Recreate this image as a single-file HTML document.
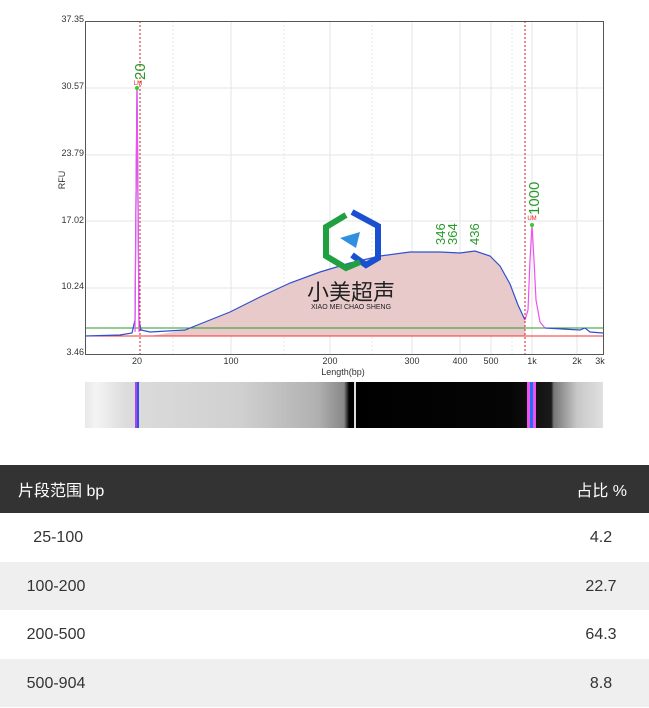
<!DOCTYPE html>
<html><head><meta charset="utf-8"><style>
body{margin:0;width:649px;height:708px;background:#fff;overflow:hidden;font-family:"Liberation Sans","Noto Sans CJK SC",sans-serif;position:relative}
svg{position:absolute;left:0;top:0}
.tbl{position:absolute;left:0;top:465px;width:649px}
.r{height:48.6px;display:flex;align-items:center;font-size:16px;color:#333}
.r .a{width:112px;text-align:center;padding-top:2px}
.r .b{margin-left:auto;width:96px;text-align:center;padding-top:2px}
.h{background:#333;color:#fff;height:48px}
.h .a{width:auto;padding-left:18px;text-align:left;padding-top:0}
.h .b{width:auto;padding-right:22px;padding-top:0}
.g{background:#efefef}
</style></head><body>
<svg width="649" height="440" font-family="Liberation Sans, Noto Sans CJK SC, sans-serif">
<defs>
<linearGradient id="gel" x1="0" x2="1">
<stop offset="0" stop-color="#e8e8e8"/><stop offset="0.02" stop-color="#f4f4f4"/><stop offset="0.08" stop-color="#dcdcdc"/>
<stop offset="0.3" stop-color="#d0d0d0"/><stop offset="0.45" stop-color="#b0b0b0"/><stop offset="0.5" stop-color="#888"/>
<stop offset="0.51" stop-color="#000"/><stop offset="0.82" stop-color="#050505"/><stop offset="0.9" stop-color="#1a1a1a"/>
<stop offset="0.905" stop-color="#777"/><stop offset="0.95" stop-color="#c8c8c8"/><stop offset="1" stop-color="#e0e0e0"/>
</linearGradient>
</defs>
<g stroke="#e6e6e6" stroke-width="1">
<line x1="85" y1="88" x2="603" y2="88"/><line x1="85" y1="155" x2="603" y2="155"/><line x1="85" y1="221" x2="603" y2="221"/><line x1="85" y1="288" x2="603" y2="288"/>
<line x1="231" y1="21" x2="231" y2="354"/><line x1="330" y1="21" x2="330" y2="354"/><line x1="412" y1="21" x2="412" y2="354"/><line x1="460" y1="21" x2="460" y2="354"/><line x1="491" y1="21" x2="491" y2="354"/><line x1="532" y1="21" x2="532" y2="354"/><line x1="577" y1="21" x2="577" y2="354"/>
</g>
<g stroke="#e6e6e6" stroke-dasharray="2,2"><line x1="173" y1="21" x2="173" y2="354"/><line x1="284" y1="21" x2="284" y2="354"/><line x1="372" y1="21" x2="372" y2="354"/><line x1="512" y1="21" x2="512" y2="354"/></g>
<path d="M150,336 L185,330 L200,324 L230,312 L260,297 L290,283 L320,272 L350,263 L380,256 L410,252 L440,252 L460,253 L475,251 L490,256 L500,266 L510,284 L518,305 L525,320 L525,336 Z" fill="#e8caca"/>
<line x1="85" y1="328" x2="603" y2="328" stroke="#2a9a2a"/>
<line x1="85" y1="336" x2="603" y2="336" stroke="#f03030"/>
<path d="M85,336 L120,335 L132,333 L135,320 L136,200 L137,88 L138,200 L139,320 L141,330 L150,332 L185,330 L200,324 L230,312 L260,297 L290,283 L320,272 L350,263 L380,256 L410,252 L440,252 L460,253 L475,251 L490,256 L500,266 L510,284 L518,305 L525,320" fill="none" stroke="#3050d0" stroke-width="1.2"/>
<path d="M135,332 L136,200 L137,88 L138,200 L139,332" fill="none" stroke="#f050f0" stroke-width="1.2"/>
<path d="M525,320 L528,310 L530,260 L532,225 L534,260 L536,300 L540,322 L545,328" fill="none" stroke="#f050f0" stroke-width="1.2"/>
<path d="M545,328 L580,330 L585,328 L590,332 L603,333" fill="none" stroke="#3050d0" stroke-width="1.2"/>
<line x1="140" y1="21" x2="140" y2="354" stroke="#d02020" stroke-dasharray="2,2"/>
<line x1="525" y1="21" x2="525" y2="354" stroke="#d02020" stroke-dasharray="2,2"/>
<rect x="85.5" y="21.5" width="518" height="333" fill="none" stroke="#555"/>
<g font-size="9" fill="#333" text-anchor="end">
<text x="84" y="22">37.35</text><text x="84" y="89">30.57</text><text x="84" y="156">23.79</text><text x="84" y="223">17.02</text><text x="84" y="289">10.24</text><text x="84" y="355">3.46</text>
</g>
<text x="65" y="180" font-size="9" fill="#333" transform="rotate(-90 65 180)" text-anchor="middle">RFU</text>
<g font-size="9" fill="#333" text-anchor="middle">
<text x="137" y="364">20</text><text x="231" y="364">100</text><text x="330" y="364">200</text><text x="412" y="364">300</text><text x="460" y="364">400</text><text x="491" y="364">500</text><text x="532" y="364">1k</text><text x="577" y="364">2k</text><text x="600" y="364">3k</text>
<text x="343" y="375">Length(bp)</text>
</g>
<g font-size="15" fill="#2a9a2a">
<text transform="translate(145,80) rotate(-90)">20</text>
<text transform="translate(539,215) rotate(-90)">1000</text>
<text font-size="13" transform="translate(445,245) rotate(-90)">346</text>
<text font-size="13" transform="translate(457,245) rotate(-90)">364</text>
<text font-size="13" transform="translate(479,245) rotate(-90)">436</text>
</g>
<text x="138" y="85" font-size="6" fill="#e02020" text-anchor="middle">LM</text>
<text x="532" y="220" font-size="6" fill="#e02020" text-anchor="middle">UM</text>
<circle cx="137" cy="88" r="2" fill="#3c3"/><circle cx="532" cy="225" r="2" fill="#3c3"/>
<path d="M352,212 L378,226 L378,258 L366,265 L352,255" fill="none" stroke="#1a50d0" stroke-width="6"/>
<path d="M346,215 L326,227 L326,256 L346,268 L360,262" fill="none" stroke="#20a040" stroke-width="6"/>
<path d="M340,238 L360,232 L356,248 Z" fill="#3090e0"/>
<text x="351" y="300" font-size="22" fill="#222" text-anchor="middle">小美超声</text>
<text x="351" y="309" font-size="7" fill="#222" text-anchor="middle">XIAO MEI CHAO SHENG</text>
<rect x="85" y="382" width="518" height="46" fill="url(#gel)"/>
<rect x="351" y="382" width="3" height="46" fill="#000"/><rect x="354" y="382" width="2" height="46" fill="#ddd"/>
<rect x="135" y="382" width="2" height="46" fill="#b040f0"/><rect x="137" y="382" width="2" height="46" fill="#3050e0"/>
<rect x="527" y="382" width="3" height="46" fill="#f050f0"/><rect x="530" y="382" width="3" height="46" fill="#2070f0"/><rect x="533" y="382" width="3" height="46" fill="#f050f0"/>
</svg>
<div class="tbl">
<div class="r h"><span class="a">片段范围 bp</span><span class="b">占比 %</span></div>
<div class="r"><span class="a">&nbsp;25-100</span><span class="b">4.2</span></div>
<div class="r g"><span class="a">100-200</span><span class="b">22.7</span></div>
<div class="r"><span class="a">200-500</span><span class="b">64.3</span></div>
<div class="r g"><span class="a">500-904</span><span class="b">8.8</span></div>
</div>
</body></html>
